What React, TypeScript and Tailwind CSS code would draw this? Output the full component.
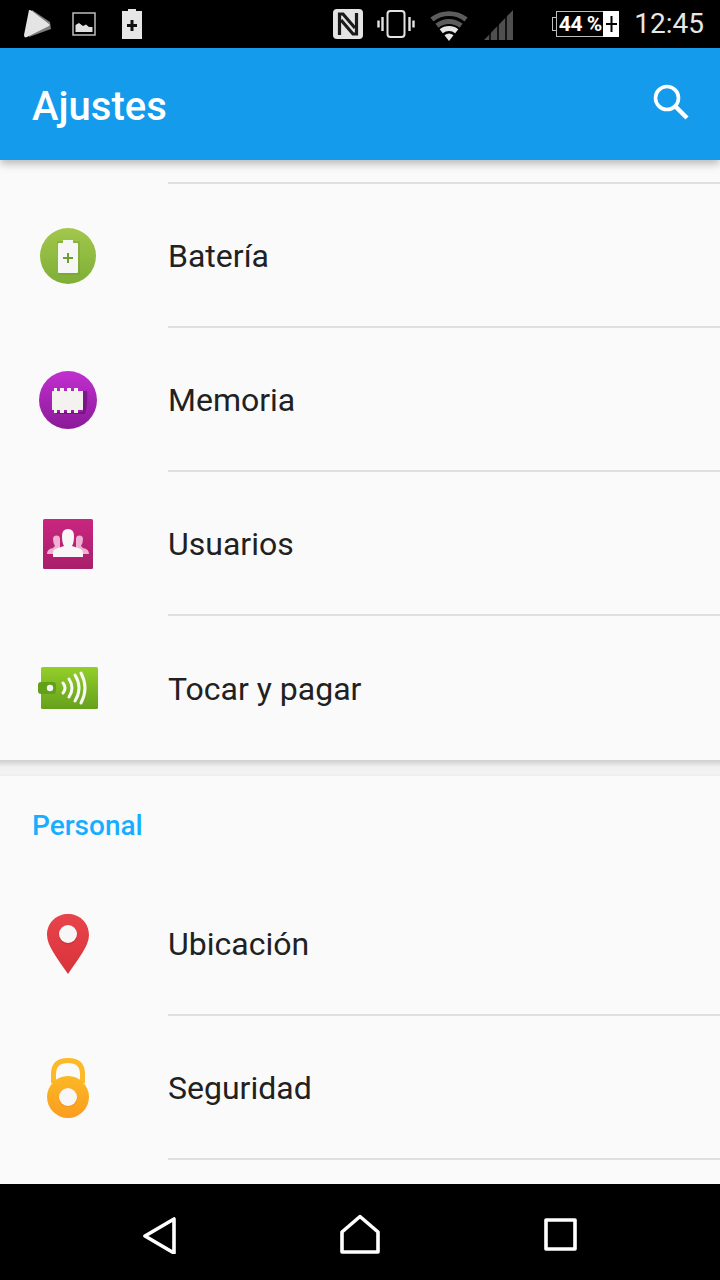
import React from "react";

const font = { fontFamily: "Roboto, sans-serif" };

function PlayStore() {
  return (
    <svg width="32" height="32" viewBox="0 0 32 32" className="shrink-0">
      <path d="M11 2 L29 14 L30 21 L8 29 Z" fill="#7d7d7d" />
      <path d="M8 2 Q9 1.500 11 3 L28 16 Q29.500 17 28 18 L6 29 Q3 30.500 3 27 Z" fill="#e4e4e4" />
    </svg>
  );
}
function ImageIcon() {
  return (
    <svg width="24" height="24" viewBox="0 0 24 24" className="shrink-0">
      <rect x="1" y="1" width="22" height="22" fill="none" stroke="#bdbdbd" strokeWidth="1.5" />
      <path d="M3.500 20 V13 L7 11 L11 14 L14 12.500 L17 15 L20.500 15 V20 Z" fill="#e0e0e0" />
    </svg>
  );
}
function BatteryCharge() {
  return (
    <svg width="20" height="32" viewBox="0 0 20 32" className="shrink-0">
      <path d="M6 1 H14 V3 H20 V31 H0 V3 H6 Z" fill="#e6e6e6" />
      <path d="M8.500 12 H11.500 V16 H15 V19 H11.500 V23 H8.500 V19 H5 V16 H8.500 Z" fill="#111" />
    </svg>
  );
}
function Nfc() {
  return (
    <svg width="32" height="32" viewBox="0 0 32 32" className="shrink-0">
      <rect x="1" y="1" width="30" height="30" rx="4" fill="#e4e4e4" />
      <path d="M7.500 27 V6 H11 L23 20" fill="none" stroke="#1a1a1a" strokeWidth="3.200" />
      <path d="M24.500 5 V26 H21 L9 12" fill="none" stroke="#1a1a1a" strokeWidth="3.200" />
    </svg>
  );
}
function Vibrate() {
  return (
    <svg width="38" height="32" viewBox="0 0 38 32" className="shrink-0">
      <rect x="10.500" y="3" width="17" height="26" rx="3" fill="none" stroke="#e4e4e4" strokeWidth="2" />
      <path d="M5.500 9 V23 M1.500 12.500 V19.500 M32.500 9 V23 M36.500 12.500 V19.500" stroke="#e4e4e4" strokeWidth="2.400" fill="none" />
    </svg>
  );
}
function Wifi() {
  return (
    <svg width="38" height="36" viewBox="0 0 38 36" className="shrink-0">
      <path d="M0.400 11.600 A30 30 0 0 1 37.600 11.600 L34.500 15.500 A25 25 0 0 0 3.500 15.500 Z" fill="#5c5c5c" />
      <path d="M5.400 17.800 A22 22 0 0 1 32.600 17.800 L29.500 21.700 A17 17 0 0 0 8.500 21.700 Z" fill="#5c5c5c" />
      <path d="M9.700 23.300 A15 15 0 0 1 28.300 23.300 L25.200 27.200 A10 10 0 0 0 12.800 27.200 Z" fill="#e6e6e6" />
      <path d="M14.500 29.300 A7.300 7.300 0 0 1 23.500 29.300 L19 35 Z" fill="#e6e6e6" />
    </svg>
  );
}
function Signal() {
  return (
    <svg width="32" height="32" viewBox="0 0 32 32" className="shrink-0">
      <path d="M2 32 L31 2 V32 Z" fill="#4f4f4f" />
      <path d="M8 0 V32 M16 0 V32 M24 0 V32" stroke="#000" strokeWidth="1.500" />
    </svg>
  );
}
function BatteryLevel() {
  return (
    <div className="flex h-[26px] w-[67px] items-stretch shrink-0">
      <div className="w-[5px] my-[6px] border-y border-l border-[#bdbdbd]" />
      <div className="w-[47px] -ml-px flex items-center justify-center border border-[#bdbdbd] border-r-0 bg-black text-white text-[21px] font-bold leading-none tracking-[-0.5px] whitespace-nowrap">
        44 %
      </div>
      <div className="w-[16px] bg-white flex items-center justify-center">
        <svg width="11" height="16" viewBox="0 0 11 16">
          <path d="M4.500 0 H6.500 V7 H11 V9 H6.500 V16 H4.500 V9 H0 V7 H4.500 Z" fill="#000" />
        </svg>
      </div>
    </div>
  );
}

function BatteryIcon() {
  return (
    <svg width="56" height="56" viewBox="0 0 56 56">
      <defs>
        <linearGradient id="bg1" x1="0" y1="0" x2="0" y2="1">
          <stop offset="0" stopColor="#a2c74c" />
          <stop offset="1" stopColor="#7fae36" />
        </linearGradient>
      </defs>
      <circle cx="28" cy="28" r="28" fill="url(#bg1)" />
      <path d="M17 13 H40 V47 H19 Z" fill="#5f8c28" opacity="0.25" />
      <path d="M23 12 H33 V15 H37 Q38 15 38 16 V44 Q38 45 37 45 H19 Q18 45 18 44 V16 Q18 15 19 15 H23 Z" fill="#f6f6f6" />
      <path d="M27 25 H29 V29 H33 V31 H29 V35 H27 V31 H23 V29 H27 Z" fill="#6aa02e" />
    </svg>
  );
}
function MemoryIcon() {
  return (
    <svg width="58" height="58" viewBox="0 0 58 58">
      <defs>
        <linearGradient id="bg2" x1="0" y1="0" x2="0" y2="1">
          <stop offset="0" stopColor="#c22fd0" />
          <stop offset="1" stopColor="#8a1a98" />
        </linearGradient>
      </defs>
      <circle cx="29" cy="29" r="29" fill="url(#bg2)" />
      <path d="M44 20 H48 Q49 32 46 43 H18 L15 41 H44 Z" fill="#4d0d55" opacity="0.5" />
      <path d="M15 17 H18 V20 H21 V17 H25 V20 H28 V17 H32 V20 H35 V17 H39 V20 H44 V39 H39 V42 H35 V39 H32 V42 H28 V39 H25 V42 H21 V39 H18 V42 H15 V39 H13 V20 H15 Z" fill="#f3f2ee" />
    </svg>
  );
}
function UsersIcon() {
  return (
    <svg width="50" height="50" viewBox="0 0 50 50">
      <defs>
        <linearGradient id="bg3" x1="0" y1="0" x2="0" y2="1">
          <stop offset="0" stopColor="#c9267f" />
          <stop offset="1" stopColor="#a81f6b" />
        </linearGradient>
      </defs>
      <rect width="50" height="50" rx="1.500" fill="url(#bg3)" />
      <path d="M4 35 Q4 30 10 29 L12 27 Q10 24 10 20 Q10 16.500 13.500 16.500 Q17 16.500 17 20 L17 35 Z" fill="#eeb3d1" />
      <path d="M46 35 Q46 30 40 29 L38 27 Q40 24 40 20 Q40 16.500 36.500 16.500 Q33 16.500 33 20 L33 35 Z" fill="#eeb3d1" />
      <path d="M10 38 V34 Q10 30 15 29 L21 27 Q19 24 19 17 Q19 10 25 10 Q31 10 31 17 Q31 24 29 27 L35 29 Q40 30 40 34 V38 Z" fill="#f8f6f7" />
    </svg>
  );
}
function PayIcon() {
  return (
    <svg width="60" height="44" viewBox="0 -1 60 44">
      <defs>
        <linearGradient id="bg4" x1="0" y1="0" x2="0" y2="1">
          <stop offset="0" stopColor="#93cf2a" />
          <stop offset="1" stopColor="#66a01c" />
        </linearGradient>
      </defs>
      <rect x="3" y="0" width="57" height="42" rx="1.500" fill="url(#bg4)" />
      <rect x="0" y="15" width="18" height="12" rx="3" fill="#62a01c" />
      <circle cx="12" cy="21" r="3.200" fill="#f4f4f4" />
      <g fill="none" stroke="#f8f8f8" strokeLinecap="round">
        <path d="M25 16 Q29 21 25 26" strokeWidth="3" />
        <path d="M31 12 Q37 21 31 30" strokeWidth="3" />
        <path d="M37 8 Q45 21 37 34" strokeWidth="3" />
        <path d="M43 6 Q51 21 43 36" strokeWidth="3" />
      </g>
    </svg>
  );
}
function PinIcon() {
  return (
    <svg width="44" height="62" viewBox="0 0 44 62">
      <defs>
        <linearGradient id="bg5" x1="0" y1="0" x2="0" y2="1">
          <stop offset="0" stopColor="#e8444b" />
          <stop offset="1" stopColor="#d9333a" />
        </linearGradient>
      </defs>
      <path d="M22 1 C33 1 43 9 43 22 C43 33 32 46 22 61 C12 46 1 33 1 22 C1 9 11 1 22 1 Z" fill="url(#bg5)" />
      <circle cx="22" cy="22" r="9.500" fill="#b8242b" opacity="0.35" />
      <circle cx="22" cy="21" r="9" fill="#f7f7f7" />
    </svg>
  );
}
function LockIcon() {
  return (
    <svg width="44" height="62" viewBox="0 0 44 62">
      <defs>
        <linearGradient id="bg6" x1="0" y1="0" x2="0" y2="1">
          <stop offset="0" stopColor="#fcb825" />
          <stop offset="1" stopColor="#fb9c1f" />
        </linearGradient>
      </defs>
      <path d="M7.500 26 V17 Q7.500 3.500 22 3.500 Q36.500 3.500 36.500 17 V26" fill="none" stroke="#fdb927" strokeWidth="5" />
      <circle cx="22" cy="40" r="21" fill="url(#bg6)" />
      <circle cx="22" cy="40.500" r="9.500" fill="#e0810f" opacity="0.4" />
      <circle cx="22" cy="40" r="9" fill="#f7f7f7" />
    </svg>
  );
}

function Row({ icon, label, divider = true }: { icon: React.ReactNode; label: string; divider?: boolean }) {
  return (
    <div className="flex h-[144px] shrink-0">
      <div className="w-[168px] shrink-0 flex items-center justify-center pr-[32px]">{icon}</div>
      <div className={`flex-1 flex items-center pt-[2px] ${divider ? "border-b-2 border-[#e0e0e0]" : ""}`}>
        <span className="text-[32px] leading-none text-[#212121]">{label}</span>
      </div>
    </div>
  );
}

export default function App() {
  return (
    <div className="w-[720px] h-[1280px] flex flex-col bg-[#fafafa] overflow-hidden" style={font}>
      <div className="h-[48px] shrink-0 bg-black flex items-center pl-[21px] pr-[16px]">
        <div className="flex items-center">
          <PlayStore />
          <div className="ml-[19px]"><ImageIcon /></div>
          <div className="ml-[26px]"><BatteryCharge /></div>
        </div>
        <div className="ml-auto flex items-center">
          <Nfc />
          <div className="ml-[13px]"><Vibrate /></div>
          <div className="ml-[15px]"><Wifi /></div>
          <div className="ml-[14px]"><Signal /></div>
          <div className="ml-[38px]"><BatteryLevel /></div>
          <span className="ml-[15px] text-[28px] leading-none text-[#e6e6e6]">12:45</span>
        </div>
      </div>

      <div className="relative z-10 h-[112px] shrink-0 bg-[#149beb] flex items-center justify-between pl-[32px] pr-[30px] shadow-[0_4px_8px_rgba(0,0,0,0.25)]">
        <span className="text-[40px] leading-none font-medium text-white pt-[6px]">Ajustes</span>
        <svg width="38" height="38" viewBox="0 0 38 38" fill="none" stroke="#fff" className="mb-[5px]">
          <circle cx="15" cy="15" r="11.500" strokeWidth="3.600" />
          <path d="M23.500 23.500 L35 35" strokeWidth="4.500" />
        </svg>
      </div>

      <div className="flex-1 min-h-0 overflow-hidden flex flex-col">
        <div className="h-[24px] shrink-0 flex">
          <div className="w-[168px]" />
          <div className="flex-1 border-b-2 border-[#e0e0e0]" />
        </div>
        <Row icon={<BatteryIcon />} label="Batería" />
        <Row icon={<MemoryIcon />} label="Memoria" />
        <Row icon={<UsersIcon />} label="Usuarios" />
        <Row icon={<PayIcon />} label="Tocar y pagar" divider={false} />
        <div className="h-[16px] shrink-0 bg-gradient-to-b from-[#cfcfcf] via-[#f0f0f0] to-[#f4f4f4] border-b-2 border-[#efefef]" />
        <div className="h-[96px] shrink-0 flex items-start pl-[32px] pt-[36px]">
          <span className="text-[28px] leading-none font-medium text-[#18aeff]">Personal</span>
        </div>
        <Row icon={<PinIcon />} label="Ubicación" />
        <Row icon={<LockIcon />} label="Seguridad" />
      </div>

      <div className="h-[96px] shrink-0 bg-black flex items-center justify-between pl-[141px] pr-[141px] pt-[4px]">
        <svg width="38" height="40" viewBox="0 0 38 40" fill="none" stroke="#fff" strokeWidth="3.600" strokeLinejoin="round">
          <path d="M33 5 V39 L4 22 Z" />
        </svg>
        <svg width="42" height="40" viewBox="0 0 42 40" fill="none" stroke="#fff" strokeWidth="3.600" strokeLinejoin="round">
          <path d="M21 2.500 L39 18 V38 H3 V18 Z" />
        </svg>
        <svg width="38" height="38" viewBox="0 0 38 38" fill="none" stroke="#fff" strokeWidth="3.600" strokeLinejoin="round">
          <rect x="5" y="5" width="29" height="29" />
        </svg>
      </div>
    </div>
  );
}
